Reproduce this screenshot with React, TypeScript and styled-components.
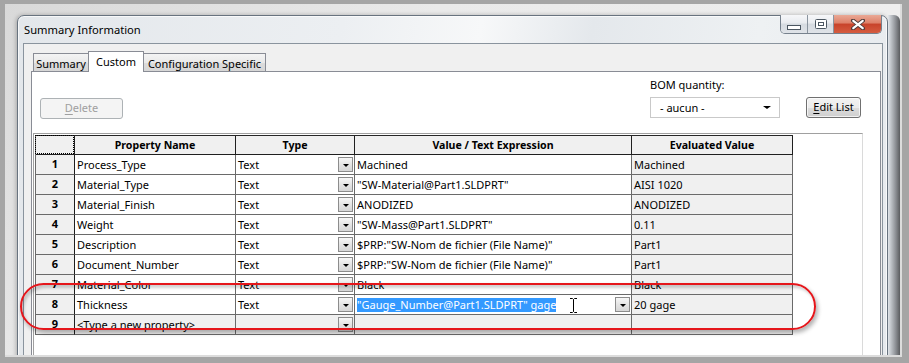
import React from "react"
import styled, { createGlobalStyle, css } from "styled-components"

const GlobalStyle = createGlobalStyle`
  html, body {
    margin: 0;
    padding: 0;
    background: #ffffff;
  }
  body {
    font-family: "Noto Sans", "Liberation Sans", sans-serif;
    font-size: 11px;
    color: #000;
  }
  * {
    box-sizing: border-box;
  }
`

const Frame = styled.div`
  position: relative;
  width: 909px;
  height: 363px;
  border-style: solid;
  border-color: #a5a5a5;
  border-width: 4px 7px 6px 5px;
`

const Stage = styled.div`
  display: flex;
  align-items: flex-start;
  height: 100%;
  padding: 11px 0 0 12px;
  overflow: hidden;
  border-right: 2px solid #dcdcdc;
  border-bottom: 2px solid #dcdcdc;
  background: linear-gradient(135deg, #d9d9d9, #eaeaea 35%, #f1f1f1);
`

const Bevel = styled.div`
  width: 12px;
  align-self: stretch;
  border-top-right-radius: 6px;
  background: linear-gradient(to right, #e2e6eb 0, #c6cacf 20%, #92959a 60%, #5a5c5f 100%);
`

const Window = styled.div`
  flex-shrink: 0;
  width: 871px;
  height: 350px;
  display: flex;
  flex-direction: column;
  border: 1px solid #68737f;
  border-radius: 7px 7px 0 0;
  background: linear-gradient(
    100deg,
    #e3e7eb 0%,
    #eceff2 35%,
    #f7f8f9 50%,
    #e4e8ec 62%,
    #eef1f3 80%,
    #e6e9ed 100%
  );
  box-shadow: -1px 0 4px rgba(0, 0, 0, 0.25), inset 0 0 0 1px rgba(255, 255, 255, 0.7);
`

const TitleBar = styled.div`
  display: flex;
  align-items: flex-start;
  height: 27px;
  padding-left: 6px;
`

const Title = styled.div`
  margin-top: 6px;
  line-height: 15px;
  font-size: 11.2px;
`

const CaptionGroup = styled.div`
  display: flex;
  height: 19px;
  margin: -1px 5px 0 auto;
  border: 1px solid #76818d;
  border-top: none;
  border-radius: 0 0 5px 5px;
  overflow: hidden;
`

const CaptionButton = styled.div<{ $w: number; $close?: boolean }>`
  width: ${(p) => p.$w}px;
  display: flex;
  align-items: center;
  justify-content: center;
  background: linear-gradient(#f6f7f9 0%, #e8ebef 45%, #d5dae0 50%, #dfe3e8 100%);
  & + & {
    border-left: 1px solid #8a949f;
  }
  ${(p) =>
    p.$close &&
    css`
      background: linear-gradient(#eaa996 0%, #de8068 45%, #c8432a 50%, #d55c40 100%);
    `}
`

const ClientArea = styled.div`
  flex: 1;
  display: flex;
  flex-direction: column;
  margin: 0 4px 0 5px;
  padding-top: 7px;
  border: 1px solid #8a949e;
  background: #f0f0f0;
`

const TabStrip = styled.div`
  display: flex;
  align-items: flex-end;
  margin-left: 9px;
`

const Tab = styled.div<{ $w: number; $active?: boolean }>`
  width: ${(p) => p.$w}px;
  height: 18px;
  padding-top: 2px;
  line-height: 15px;
  text-align: center;
  border: 1px solid #898c95;
  border-bottom: none;
  background: linear-gradient(#f4f4f4, #e9e9e9 50%, #dcdcdc 51%, #d6d6d6);
  & + & {
    margin-left: -1px;
  }
  ${(p) =>
    p.$active &&
    css`
      position: relative;
      z-index: 1;
      height: 21px;
      padding-top: 2px;
      margin-bottom: -1px;
      background: #ffffff;
    `}
`

const Panel = styled.div`
  flex: 1;
  display: flex;
  flex-direction: column;
  margin: 0 1px 0 7px;
  border: 1px solid #898c95;
  background: #ffffff;
`

const Toolbar = styled.div`
  display: flex;
  align-items: flex-end;
  padding: 6px 19px 0 8px;
`

const PushButton = styled.div<{ $w: number; $disabled?: boolean }>`
  width: ${(p) => p.$w}px;
  height: 21px;
  line-height: 18px;
  text-align: center;
  border: 1px solid #707070;
  border-radius: 3px;
  background: linear-gradient(#f2f2f2 0%, #ebebeb 50%, #dddddd 51%, #cfcfcf 100%);
  box-shadow: inset 0 0 0 1px rgba(255, 255, 255, 0.7);
  u {
    text-decoration: underline;
    text-underline-offset: 2px;
  }
  ${(p) =>
    p.$disabled &&
    css`
      margin-bottom: -1px;
      color: #a0a0a0;
      border-color: #adb2b5;
      background: #f4f4f4;
      box-shadow: none;
    `}
`

const Spacer = styled.div`
  flex: 1;
`

const BomGroup = styled.div`
  display: flex;
  flex-direction: column;
  width: 130px;
`

const BomLabel = styled.div`
  line-height: 14px;
  margin-bottom: 5px;
`

const Select = styled.div`
  display: flex;
  align-items: center;
  height: 21px;
  padding: 0 8px 0 9px;
  border: 1px solid #c9c9c9;
  background: #ffffff;
`

const Arrow = styled.span<{ $size?: number }>`
  width: 0;
  height: 0;
  margin-left: auto;
  border-left: ${(p) => p.$size ?? 3.5}px solid transparent;
  border-right: ${(p) => p.$size ?? 3.5}px solid transparent;
  border-top: ${(p) => (p.$size ?? 3.5) * 0.9}px solid #000;
`

const EditButton = styled(PushButton)`
  margin-left: 26px;
`

const GridWrap = styled.div`
  flex: 1;
  margin: 15px 17px 0 1px;
  padding: 1px 0 0 1px;
  border: 1px solid;
  border-color: #a0a0a0 #dadada #dadada #a0a0a0;
`

const Grid = styled.div`
  display: grid;
  grid-template-columns: 39px 161px 119px 277px 161px;
  width: fit-content;
  border-top: 1px solid #262626;
  border-left: 1px solid #6a6a6a;
`

const HeadCell = styled.div<{ $corner?: boolean }>`
  position: relative;
  height: 19px;
  line-height: 18px;
  text-align: center;
  font-weight: 700;
  font-size: 10.6px;
  background: #f0f0f0;
  border-right: 1px solid #1f1f1f;
  border-bottom: 1px solid #1f1f1f;
  ${(p) =>
    p.$corner &&
    css`
      &::after {
        content: "";
        position: absolute;
        inset: -1px 0 0 -1px;
        border: 1px dotted #000;
      }
    `}
`

const RowHead = styled.div`
  height: 20px;
  line-height: 18px;
  text-align: center;
  font-weight: 700;
  background: #f0f0f0;
  border-right: 1px solid #1f1f1f;
  border-bottom: 1px solid #6a6a6a;
`

const Cell = styled.div<{ $gray?: boolean }>`
  position: relative;
  display: flex;
  align-items: center;
  height: 20px;
  padding-left: 2px;
  white-space: nowrap;
  overflow: hidden;
  background: ${(p) => (p.$gray ? "#f0f0f0" : "#ffffff")};
  border-right: 1px solid #6a6a6a;
  border-bottom: 1px solid #6a6a6a;
`

const DropButton = styled.div`
  display: flex;
  align-items: center;
  justify-content: center;
  flex-shrink: 0;
  width: 15px;
  height: 15px;
  margin-left: auto;
  margin-right: 1px;
  border: 1px solid #8c8c8c;
  background: linear-gradient(#f7f7f7, #e4e4e4 50%, #d6d6d6);
  ${Arrow} {
    margin: 1px 0 0;
  }
`

const Selected = styled.span`
  line-height: 14px;
  color: #ffffff;
  background: #3399ff;
`

const IBeam = styled.svg`
  position: absolute;
  left: 214px;
  top: 2px;
`

const RedOval = styled.div`
  position: absolute;
  left: 15px;
  top: 279px;
  width: 796px;
  height: 47px;
  border: 2px solid #e5161b;
  border-radius: 24px;
  pointer-events: none;
  box-shadow: 2px 3px 4px rgba(0, 0, 0, 0.3), inset 2px 3px 3px rgba(0, 0, 0, 0.18);
`

type Row = {
  name: string
  type: string
  value: string
  evaluated: string
}

const rows: Row[] = [
  { name: "Process_Type", type: "Text", value: "Machined", evaluated: "Machined" },
  { name: "Material_Type", type: "Text", value: "\"SW-Material@Part1.SLDPRT\"", evaluated: "AISI 1020" },
  { name: "Material_Finish", type: "Text", value: "ANODIZED", evaluated: "ANODIZED" },
  { name: "Weight", type: "Text", value: "\"SW-Mass@Part1.SLDPRT\"", evaluated: "0.11" },
  { name: "Description", type: "Text", value: "$PRP:\"SW-Nom de fichier (File Name)\"", evaluated: "Part1" },
  { name: "Document_Number", type: "Text", value: "$PRP:\"SW-Nom de fichier (File Name)\"", evaluated: "Part1" },
  { name: "Material_Color", type: "Text", value: "Black", evaluated: "Black" },
]

const MinGlyph = () => (
  <svg width="14" height="16" viewBox="0 0 14 16">
    <rect x="0.5" y="9.5" width="13" height="4" fill="#fff" stroke="#4b5661" />
  </svg>
)

const MaxGlyph = () => (
  <svg width="12" height="10" viewBox="0 0 12 10">
    <rect x="0.5" y="0.5" width="11" height="9" fill="#fff" stroke="#4b5661" rx="1" />
    <rect x="3.5" y="3.5" width="5" height="3" fill="#fff" stroke="#4b5661" />
  </svg>
)

const CloseGlyph = () => (
  <svg width="14" height="11" viewBox="0 0 14 11">
    <path d="M2 1.5 L12 9.5 M12 1.5 L2 9.5" stroke="#4a3a3a" strokeWidth="4" strokeLinecap="round" />
    <path d="M2.3 1.8 L11.7 9.2 M11.7 1.8 L2.3 9.2" stroke="#ffffff" strokeWidth="2.2" strokeLinecap="round" />
  </svg>
)

const Drop = () => (
  <DropButton>
    <Arrow $size={3.5} />
  </DropButton>
)

export default function App() {
  return (
    <>
      <GlobalStyle />
      <Frame>
        <Stage>
          <Window>
            <TitleBar>
              <Title>Summary Information</Title>
              <CaptionGroup>
                <CaptionButton $w={26}>
                  <MinGlyph />
                </CaptionButton>
                <CaptionButton $w={26}>
                  <MaxGlyph />
                </CaptionButton>
                <CaptionButton $w={48} $close>
                  <CloseGlyph />
                </CaptionButton>
              </CaptionGroup>
            </TitleBar>
            <ClientArea>
              <TabStrip>
                <Tab $w={56}>Summary</Tab>
                <Tab $w={56} $active>
                  Custom
                </Tab>
                <Tab $w={123}>Configuration Specific</Tab>
              </TabStrip>
              <Panel>
                <Toolbar>
                  <PushButton $w={83} $disabled>
                    <u>D</u>elete
                  </PushButton>
                  <Spacer />
                  <BomGroup>
                    <BomLabel>BOM quantity:</BomLabel>
                    <Select>
                      - aucun -
                      <Arrow $size={4} />
                    </Select>
                  </BomGroup>
                  <EditButton $w={55}>
                    <u>E</u>dit List
                  </EditButton>
                </Toolbar>
                <GridWrap>
                  <Grid>
                    <HeadCell $corner />
                    <HeadCell>Property Name</HeadCell>
                    <HeadCell>Type</HeadCell>
                    <HeadCell>Value / Text Expression</HeadCell>
                    <HeadCell>Evaluated Value</HeadCell>
                    {rows.map((r, i) => (
                      <React.Fragment key={r.name}>
                        <RowHead>{i + 1}</RowHead>
                        <Cell>{r.name}</Cell>
                        <Cell>
                          {r.type}
                          <Drop />
                        </Cell>
                        <Cell>{r.value}</Cell>
                        <Cell $gray>{r.evaluated}</Cell>
                      </React.Fragment>
                    ))}
                    <RowHead>8</RowHead>
                    <Cell>Thickness</Cell>
                    <Cell>
                      Text
                      <Drop />
                    </Cell>
                    <Cell>
                      <Selected>"Gauge_Number@Part1.SLDPRT" gage</Selected>
                      <IBeam width="9" height="17" viewBox="0 0 9 17">
                        <path d="M1 1.5 H3.5 L4.5 2.5 L5.5 1.5 H8 M4.5 2.5 V14.5 M1 15.5 H3.5 L4.5 14.5 L5.5 15.5 H8" stroke="#000" strokeWidth="1" fill="none" />
                      </IBeam>
                      <Drop />
                    </Cell>
                    <Cell $gray>20 gage</Cell>
                    <RowHead>9</RowHead>
                    <Cell $gray>&lt;Type a new property&gt;</Cell>
                    <Cell $gray>
                      <Drop />
                    </Cell>
                    <Cell $gray />
                    <Cell $gray />
                  </Grid>
                </GridWrap>
              </Panel>
            </ClientArea>
          </Window>
          <Bevel />
        </Stage>
        <RedOval />
      </Frame>
    </>
  )
}
